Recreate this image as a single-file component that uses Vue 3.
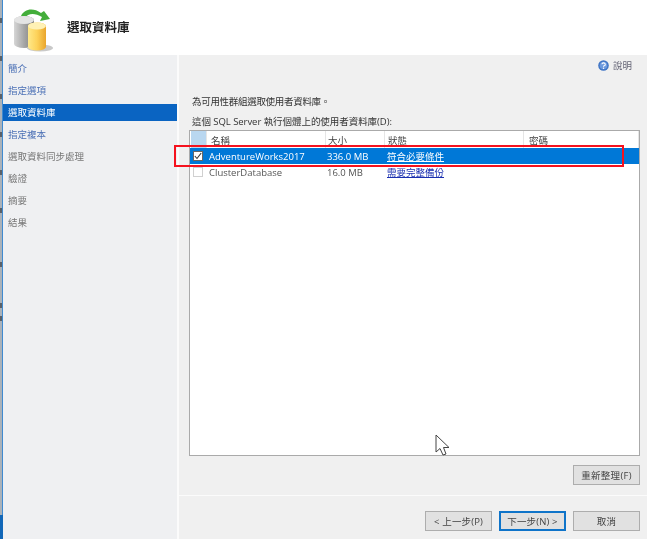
<script setup>
const steps = [
  { t: '簡介', k: 'link' },
  { t: '指定選項', k: 'link' },
  { t: '選取資料庫', k: 'sel' },
  { t: '指定複本', k: 'link' },
  { t: '選取資料同步處理', k: 'off' },
  { t: '驗證', k: 'off' },
  { t: '摘要', k: 'off' },
  { t: '結果', k: 'off' }
]
const dashes = [18, 56, 94, 132, 170, 208, 262, 303, 316]
</script>

<template>
  <div class="win" lang="zh-Hant">
    <div class="strip">
      <i v-for="d in dashes" :key="d" class="dash" :style="{ top: d + 'px' }"></i>
      <i class="taskbar"></i>
    </div>
    <div class="dialog">
      <header class="head">
        <svg class="logo" width="40" height="46" viewBox="0 0 40 46">
          <defs>
            <linearGradient id="g" x1="0" x2="1"><stop offset="0" stop-color="#d6d6d6"/><stop offset=".5" stop-color="#a6a6a6"/><stop offset="1" stop-color="#7c7c7c"/></linearGradient>
            <linearGradient id="y" x1="0" x2="1"><stop offset="0" stop-color="#ffe98a"/><stop offset=".5" stop-color="#fdd25a"/><stop offset="1" stop-color="#e9a52c"/></linearGradient>
          </defs>
          <path d="M7 9 C10 2 19 0 27 6 L30 4 L36 12 L26 14 L28 10 C21 6 14 6 11 11Z" fill="#43ad3a"/>
          <path d="M0 13 a10 4 0 0 1 20 0 V37 a10 4 0 0 1 -20 0Z" fill="url(#g)"/>
          <ellipse cx="10" cy="13" rx="10" ry="4" fill="#e4e4e4"/>
          <ellipse cx="26" cy="41" rx="13" ry="3.500" fill="#c9c9c9"/>
          <path d="M14 19 a9 3.500 0 0 1 18 0 V40 a9 3.500 0 0 1 -18 0Z" fill="url(#y)"/>
          <ellipse cx="23" cy="19" rx="9" ry="3.500" fill="#fff1b5"/>
        </svg>
        <h1 class="title">選取資料庫</h1>
      </header>
      <div class="body">
        <nav class="side">
          <div v-for="s in steps" :key="s.t" class="step" :class="s.k"><span class="steptext">{{ s.t }}</span></div>
        </nav>
        <main class="main">
          <div class="helpbar">
            <svg width="11" height="11" viewBox="0 0 11 11"><circle cx="5.500" cy="5.500" r="5.300" fill="#3f74c4"/><circle cx="5.500" cy="5.500" r="3.800" fill="#6d9ade"/><path d="M3.900 4.300a1.700 1.500 0 1 1 2.300 1.500q-.7.300-.7 1" fill="none" stroke="#fff" stroke-width="1.100"/><circle cx="5.500" cy="8.300" r=".7" fill="#fff"/></svg>
            <span>說明</span>
          </div>
          <p class="lead">為可用性群組選取使用者資料庫。</p>
          <p class="caption">這個 SQL Server 執行個體上的使用者資料庫(D):</p>
          <div class="table">
            <div class="row thead">
              <div class="c0 corner"></div>
              <div class="c1">名稱</div>
              <div class="c2">大小</div>
              <div class="c3">狀態</div>
              <div class="c4">密碼</div>
            </div>
            <div class="row selected">
              <div class="c0"><span class="check on"><svg width="8" height="8" viewBox="0 0 8 8"><path d="M.8 4L3 6.500L7.200 1" fill="none" stroke="#333" stroke-width="1.100"/></svg></span></div>
              <div class="c1">AdventureWorks2017</div>
              <div class="c2">336.0 MB</div>
              <div class="c3 linkcell">符合必要條件</div>
            </div>
            <div class="row plain">
              <div class="c0"><span class="check"></span></div>
              <div class="c1">ClusterDatabase</div>
              <div class="c2">16.0 MB</div>
              <div class="c3 linkcell blue">需要完整備份</div>
            </div>
          </div>
          <div class="refresh"><button class="btn wide">重新整理(F)</button></div>
          <footer class="foot">
            <button class="btn">&lt; 上一步(P)</button>
            <button class="btn primary">下一步(N) &gt;</button>
            <button class="btn cancel">取消</button>
          </footer>
        </main>
      </div>
    </div>
    <div class="redbox"></div>
    <svg class="cursor" width="15" height="23" viewBox="0 0 15 23"><path d="M1 1V18L5 14.500L8 21L11 20L8.500 13.500H14Z" fill="#fff" stroke="#444" stroke-width="1"/></svg>
  </div>
</template>

<style scoped>
.win { position: relative; display: flex; width: 647px; height: 539px; overflow: hidden; background: #f0f0f0; font-family: "Open Sans", "Noto Sans CJK TC", sans-serif; font-size: 9.500px; color: #333; filter: blur(0.35px); }
.strip { position: relative; flex: 0 0 3px; background: #3f8ad0; box-shadow: inset 2px 0 0 #aab2ba; }
.dash { position: absolute; left: 0; width: 2px; height: 5px; background: #5b6168; }
.taskbar { position: absolute; left: 0; bottom: 0; width: 3px; height: 24px; background: #1167b8; }
.dialog { flex: 1; display: flex; flex-direction: column; min-width: 0; }
.head { flex: 0 0 55px; display: flex; align-items: center; gap: 13px; padding-left: 11px; background: #fff; }
.logo { flex: none; margin-top: 4px; }
.title { margin: 0 0 2px; font-size: 12.500px; font-weight: 700; color: #222; font-family: "Noto Sans CJK TC", sans-serif; }
.body { flex: 1; display: flex; min-height: 0; }
.side { flex: 0 0 174px; padding-top: 2px; background: #eff0f2; border-right: 2px solid #fbfbfb; }
.step { height: 22px; display: flex; align-items: center; justify-content: flex-start; padding-left: 5px; color: #4a6fb5; box-sizing: border-box; }
.step.off { color: #777; }
.step.sel { position: relative; color: #fff; }
.step.sel::before { content: ""; position: absolute; left: 0; right: 0; top: 3px; height: 17px; background: #0a64c2; }
.steptext { position: relative; }
.main { flex: 1; min-width: 0; display: flex; flex-direction: column; padding: 0 7px 0 10px; }
.helpbar { display: flex; align-items: center; justify-content: flex-end; gap: 4px; height: 20px; padding-right: 8px; color: #667; }
.lead { margin: 19px 0 0 3px; height: 14px; line-height: 14px; color: #333; letter-spacing: -.3px; font-family: "Noto Sans CJK TC", sans-serif; }
.caption { margin: 7px 0 0 3px; height: 14px; line-height: 14px; color: #333; letter-spacing: -.05px; }
.table { flex: 0 0 326px; margin-top: 1px; background: #fff; border: 1px solid #aaa; box-sizing: border-box; overflow: hidden; }
.row { display: flex; align-items: center; }
.thead { height: 17px; color: #444; }
.thead > div { height: 100%; display: flex; align-items: center; border-right: 1px solid #e5e5e5; box-sizing: border-box; }
.corner { background: #b9d7f0; margin-left: 1px; }
.selected { height: 16px; background: #0078d7; color: #fff; }
.plain { height: 16px; color: #555; }
.c0 { flex: 0 0 16px; display: flex; align-items: center; justify-content: center; }
.c1 { flex: 0 0 119px; padding-left: 3px; box-sizing: border-box; }
.thead .c1 { padding-left: 4px; }
.c2 { flex: 0 0 59px; padding-left: 2px; box-sizing: border-box; }
.c3 { flex: 0 0 139px; padding-left: 3px; box-sizing: border-box; text-decoration: underline; }
.thead .c3 { text-decoration: none; }
.c4 { flex: 1; padding-left: 5px; }
.blue { color: #1a2fb0; }
.check { width: 10px; height: 10px; background: #fff; border: 1px solid #d0d0d0; display: flex; align-items: center; justify-content: center; box-sizing: border-box; }
.check.on { border-color: #666; }
.refresh { display: flex; justify-content: flex-end; margin-top: 9px; }
.btn { width: 67px; height: 20px; padding: 0; background: #e1e1e1; border: 1px solid #adadad; font: inherit; color: #444; box-sizing: border-box; letter-spacing: .15px; }
.btn.wide { letter-spacing: .3px; }
.btn.primary { border: 2px solid #0f74c9; }
.foot { margin: 10px -7px 0 -10px; padding: 15px 7px 0 0; border-top: 1px solid #fbfbfb; display: flex; justify-content: flex-end; gap: 7px; }
.redbox { position: absolute; left: 174px; top: 145px; width: 446px; height: 18px; border: 2.500px solid #f5121e; }
.cursor { position: absolute; left: 435px; top: 434px; }
</style>
